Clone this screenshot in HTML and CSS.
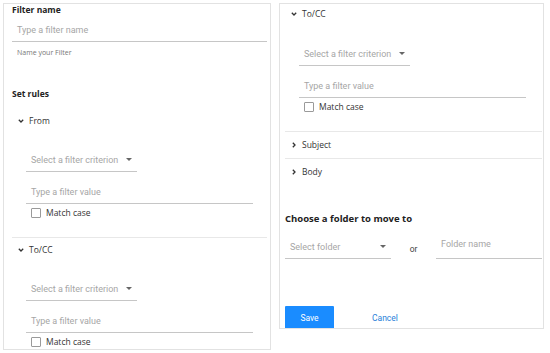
FILE: index.html
```html
<!DOCTYPE html>
<html lang="en">
<head>
  <meta charset="UTF-8">
  <title>Filter rules</title>
  <link rel="stylesheet" href="styles.css">
</head>
<body>
  <div class="page">
    <div class="panel panel-left">
      <div class="label">Filter name</div>
      <div class="field field-name"><span class="ph">Type a filter name</span></div>
      <div class="hint">Name your Filter</div>

      <div class="label label-rules">Set rules</div>

      <div class="rule">
        <div class="rule-head">
          <svg class="chev" width="6" height="6" viewBox="0 0 6 6"><polyline points="0.8,1.8 3,4 5.2,1.8" /></svg>
          <span>From</span>
        </div>
        <div class="rule-body">
          <div class="field select"><span class="ph">Select a filter criterion</span><span class="caret"></span></div>
          <div class="field value"><span class="ph">Type a filter value</span></div>
          <label class="check"><span class="box"></span>Match case</label>
        </div>
      </div>

      <div class="rule">
        <div class="rule-head">
          <svg class="chev" width="6" height="6" viewBox="0 0 6 6"><polyline points="0.8,1.8 3,4 5.2,1.8" /></svg>
          <span>To/CC</span>
        </div>
        <div class="rule-body">
          <div class="field select"><span class="ph">Select a filter criterion</span><span class="caret"></span></div>
          <div class="field value"><span class="ph">Type a filter value</span></div>
          <label class="check"><span class="box"></span>Match case</label>
        </div>
      </div>
    </div>

    <div class="panel panel-right">
      <div class="rule first">
        <div class="rule-head">
          <svg class="chev" width="6" height="6" viewBox="0 0 6 6"><polyline points="0.8,1.8 3,4 5.2,1.8" /></svg>
          <span>To/CC</span>
        </div>
        <div class="rule-body">
          <div class="field select"><span class="ph">Select a filter criterion</span><span class="caret"></span></div>
          <div class="field value"><span class="ph">Type a filter value</span></div>
          <label class="check"><span class="box"></span>Match case</label>
        </div>
      </div>

      <div class="rule collapsed">
        <div class="rule-head">
          <svg class="chev" width="6" height="6" viewBox="0 0 6 6"><polyline points="1.8,0.8 4,3 1.8,5.2" /></svg>
          <span>Subject</span>
        </div>
      </div>

      <div class="rule collapsed last">
        <div class="rule-head">
          <svg class="chev" width="6" height="6" viewBox="0 0 6 6"><polyline points="1.8,0.8 4,3 1.8,5.2" /></svg>
          <span>Body</span>
        </div>
      </div>

      <div class="label label-folder">Choose a folder to move to</div>
      <div class="folder-row">
        <div class="field folder-select"><span class="ph">Select folder</span><span class="caret"></span></div>
        <span class="or">or</span>
        <div class="field folder-name"><span class="ph">Folder name</span></div>
      </div>

      <div class="actions">
        <button class="btn-save">Save</button>
        <button class="btn-cancel">Cancel</button>
      </div>
    </div>
  </div>
</body>
</html>
```

FILE: styles.css
```css
body {
  margin: 0;
  background: #fff;
  font-family: 'Open Sans', 'Noto Sans', sans-serif;
  color: #333;
}
.page {
  display: flex;
  align-items: flex-start;
  gap: 8px;
  padding: 3px 0 0 3px;
}
.panel {
  border: 1px solid #e2e2e2;
  background: #fff;
  box-sizing: border-box;
  overflow: hidden;
}
.panel-left {
  width: 268px;
  height: 347px;
  padding: 0 3px 0 8px;
}
.panel-right {
  width: 265px;
  height: 326px;
  padding: 0 1px 0 5px;
}
.label {
  font-size: 8.5px;
  font-weight: 700;
  line-height: 12px;
  color: #222;
}
.label-rules {
  margin-top: 30px;
}
.label-folder {
  margin-top: 28px;
  font-size: 9.5px;
}
.hint {
  font-size: 7px;
  line-height: 10px;
  color: #777;
  padding-left: 5px;
  margin-top: 6px;
}
.field {
  display: flex;
  align-items: center;
  border-bottom: 1px solid #c6c6c6;
  box-sizing: border-box;
  padding: 0 5px;
  font-family: Roboto, 'Liberation Sans', sans-serif;
  font-size: 9px;
}
.ph {
  color: #a6a6a6;
  flex: 1;
}
.field-name {
  height: 26px;
  padding-top: 2px;
}
.rule {
  border-bottom: 1px solid #e8e8e8;
}
.rule.last {
  border-bottom: none;
}
.rule-head {
  display: flex;
  align-items: center;
  gap: 5px;
  padding: 6px 0 6px 6px;
  font-size: 8.5px;
  line-height: 12px;
  color: #333;
}
.label-rules + .rule {
  margin-top: 9px;
}
.rule.first .rule-head {
  padding-top: 4px;
  padding-bottom: 7px;
}
.rule.collapsed .rule-head {
  padding-top: 7px;
  padding-bottom: 7px;
}
.chev polyline {
  fill: none;
  stroke: #333;
  stroke-width: 1.3;
}
.rule-body {
  padding: 15px 0 18px 14px;
}
.select {
  width: 111px;
  height: 24px;
}
.value {
  width: 227px;
  height: 24px;
  margin-top: 8px;
}
.caret {
  width: 0;
  height: 0;
  border-left: 3px solid transparent;
  border-right: 3px solid transparent;
  border-top: 3px solid #666;
}
.check {
  display: flex;
  align-items: center;
  gap: 5px;
  margin-top: 3px;
  padding-left: 5px;
  font-size: 8.5px;
  line-height: 12px;
  color: #333;
}
.box {
  width: 8px;
  height: 8px;
  border: 1px solid #9a9a9a;
  border-radius: 1px;
}
.folder-row {
  display: flex;
  align-items: flex-end;
  margin-top: 8px;
}
.folder-select {
  width: 106px;
  height: 24px;
}
.or {
  width: 45px;
  text-align: center;
  font-family: Roboto, 'Liberation Sans', sans-serif;
  font-size: 8.5px;
  color: #444;
  padding-bottom: 5px;
}
.folder-name {
  width: 106px;
  height: 26px;
  padding-bottom: 4px;
}
.actions {
  display: flex;
  align-items: center;
  margin-top: 47px;
}
button {
  font-family: Roboto, 'Liberation Sans', sans-serif;
  font-size: 8.5px;
  border: none;
  cursor: pointer;
}
.btn-save {
  width: 49px;
  height: 24px;
  background: #1a8cff;
  color: #fff;
  border-radius: 1px;
}
.btn-cancel {
  background: none;
  color: #2b7fd9;
  margin-left: 33px;
  padding: 0 5px;
}
```
